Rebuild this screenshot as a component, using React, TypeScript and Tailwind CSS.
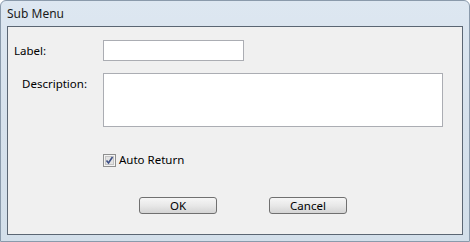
import React from 'react';

const font = { fontFamily: '"Noto Sans", "Open Sans", sans-serif' };

function Button({ label }: { label: string }) {
  return (
    <button className="w-[78px] h-[17px] rounded-[3px] border border-[#707070] bg-gradient-to-b from-[#f6f6f6] via-[#e8e8e8] to-[#d4d4d4] text-[11.5px] leading-none text-black flex items-center justify-center">
      {label}
    </button>
  );
}

export default function App() {
  return (
    <div
      style={font}
      className="w-[470px] h-[242px] rounded-t-[6px] bg-gradient-to-b from-[#dde7f1] via-[#d6e1ec] to-[#d3dfea] border border-[#8a9aab] flex flex-col"
    >
      <div className="h-[25px] pl-[6px] flex items-center text-[12px] text-[#1a1a1a]">Sub Menu</div>
      <div className="mx-[6px] mb-[6px] flex-1 border border-[#5b6673] bg-[#f0f0f0] flex flex-col text-[11.5px] text-black">
        <div className="mt-[13px] flex items-center">
          <div className="w-[95px] pl-[6px]">Label:</div>
          <div className="w-[141px] h-[21px] border border-[#abadb3] bg-white" />
        </div>
        <div className="mt-[12px] flex items-start">
          <div className="w-[95px] pl-[14px] pt-[2px]">Description:</div>
          <div className="w-[340px] h-[54px] border border-[#abadb3] bg-white" />
        </div>
        <div className="mt-[25px] h-[16px] pl-[95px] flex items-center gap-[3px]">
          <svg width="13" height="13" viewBox="0 0 13 13">
            <rect x="0.5" y="0.5" width="12" height="12" fill="#f4f4f4" stroke="#8e8f8f" />
            <rect x="2.5" y="2.5" width="8" height="8" fill="#e3e3e3" stroke="#c4c4c4" />
            <path d="M3.5 6.5 L5.5 9 L9.5 3" fill="none" stroke="#3c4f86" strokeWidth="1.6" />
          </svg>
          <span>Auto Return</span>
        </div>
        <div className="mt-[29px] pl-[131px] flex gap-[52px]">
          <Button label="OK" />
          <Button label="Cancel" />
        </div>
      </div>
    </div>
  );
}
